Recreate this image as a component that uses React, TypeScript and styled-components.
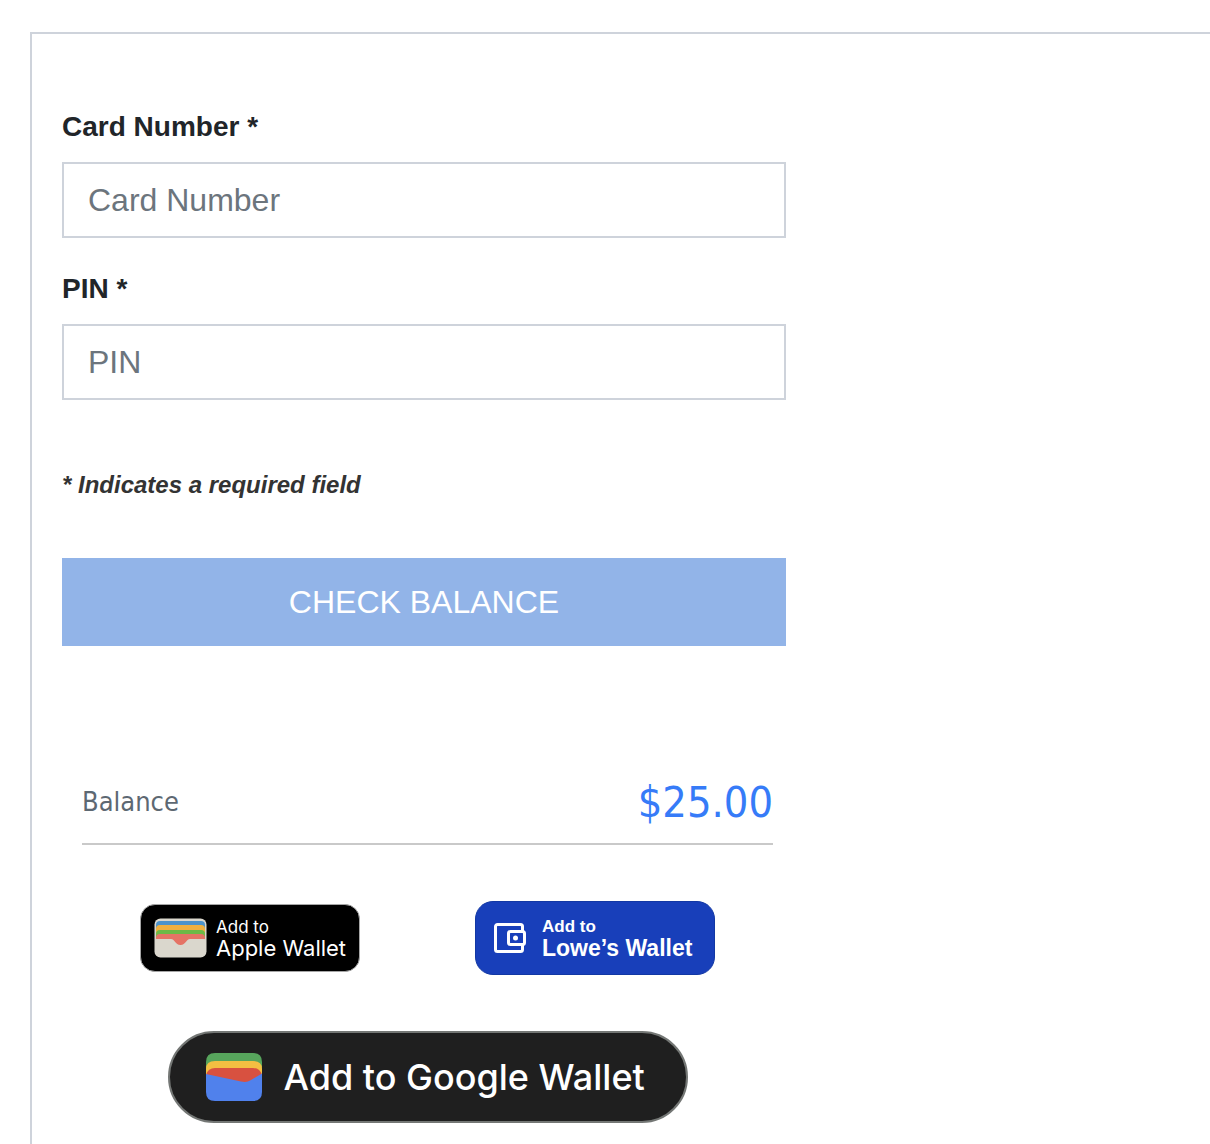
import React from "react";
import styled, { createGlobalStyle } from "styled-components";

const sans = `"Helvetica Neue", Helvetica, "Liberation Sans", Arial, sans-serif`;

const GlobalStyle = createGlobalStyle`
  *, *::before, *::after { box-sizing: border-box; }
  body { margin: 0; background: #fff; font-family: ${sans}; }
`;

const Page = styled.div`
  display: flex;
  flex-direction: column;
  min-height: 100vh;
  padding: 32px 0 0 30px;
`;

const Panel = styled.main`
  flex: 1;
  padding: 76px 30px 20px;
  border: 2px solid #ced3db;
  border-width: 2px 0 0 2px;
`;

const Content = styled.div`
  max-width: 724px;
`;

const Form = styled.form`
  display: flex;
  flex-direction: column;
  gap: 34px;
`;

const Field = styled.div`
  display: flex;
  flex-direction: column;
  gap: 18px;
`;

const Label = styled.label`
  font-size: 28px;
  font-weight: 700;
  line-height: 34px;
  color: #212529;
`;

const Input = styled.input`
  width: 100%;
  height: 76px;
  padding: 0 24px;
  border: 2px solid #ced3db;
  border-radius: 0;
  background: #fff;
  font-family: inherit;
  font-size: 32px;
  color: #212529;

  &::placeholder {
    color: #6c757d;
    opacity: 1;
  }
`;

const RequiredNote = styled.p`
  margin: 36px 0 24px;
  font-size: 24px;
  font-style: italic;
  font-weight: 700;
  line-height: 30px;
  color: #333;
`;

const SubmitButton = styled.button`
  height: 88px;
  border: 0;
  background: #92b4e8;
  font-family: inherit;
  font-size: 32px;
  color: #fff;
`;

const Result = styled.section`
  margin: 130px 13px 0 20px;
`;

const BalanceRow = styled.div`
  display: flex;
  align-items: center;
  justify-content: space-between;
  height: 69px;
  padding-bottom: 16px;
  border-bottom: 2px solid #c9c9c9;
  font-family: "DejaVu Sans Condensed", "DejaVu Sans", sans-serif;
`;

const BalanceLabel = styled.span`
  font-size: 27px;
  line-height: 34px;
  color: #5d6872;
`;

const BalanceAmount = styled.span`
  font-size: 43px;
  line-height: 50px;
  color: #367bf8;
`;

const WalletRow = styled.div`
  display: flex;
  align-items: center;
  justify-content: center;
  gap: 115px;
  margin-top: 56px;
`;

const WalletButton = styled.button`
  display: flex;
  align-items: center;
  flex-shrink: 0;
  color: #fff;
  text-align: left;
  white-space: nowrap;

  svg {
    flex-shrink: 0;
  }
`;

const AppleButton = styled(WalletButton)`
  gap: 9px;
  width: 220px;
  height: 68px;
  padding: 0 13px;
  border: 1px solid #a6a6a6;
  border-radius: 15px;
  background: #000;
  font-family: Inter, sans-serif;
`;

const LowesButton = styled(WalletButton)`
  gap: 16px;
  width: 240px;
  height: 74px;
  padding: 0 18px;
  border: 1px solid #1238a4;
  border-radius: 18px;
  background: #183fba;
  font-family: ${sans};
  font-weight: 700;
`;

const GoogleButton = styled(WalletButton)`
  gap: 22px;
  width: 520px;
  height: 92px;
  margin: 56px auto 0;
  padding: 0 36px;
  border: 2px solid #747775;
  border-radius: 46px;
  background: #1f1f1f;
  font-family: Inter, sans-serif;
  font-size: 36px;
  font-weight: 500;
`;

const Stack = styled.span`
  display: flex;
  flex-direction: column;
`;

const SmallLine = styled.span`
  font-size: 17px;
  line-height: 20px;
`;

const LargeLine = styled.span<{ $size: number }>`
  font-size: ${({ $size }) => $size}px;
  line-height: 22px;
`;

const AppleWalletIcon = () => (
  <svg width="53" height="40" viewBox="0 0 53 40" aria-hidden="true">
    <rect x="0.5" y="0.5" width="52" height="39" rx="6" fill="#dad7cd" />
    <path d="M2 7q0-4 4-4h41q4 0 4 4v8H2z" fill="#4c93cb" />
    <path d="M2 11q0-4 4-4h41q4 0 4 4v8H2z" fill="#f0b03f" />
    <path d="M2 16q0-4 4-4h41q4 0 4 4v4H2z" fill="#6db946" />
    <path d="M2 20q0-4 4-4h41q4 0 4 4v1H36c-4 0-4 6-9.500 6S21 21 17 21H2z" fill="#e57365" />
  </svg>
);

const LowesWalletIcon = () => (
  <svg width="32" height="32" viewBox="0 0 32 32" fill="none" stroke="#fff" strokeWidth="3" aria-hidden="true">
    <path d="M28.500 9V4.500a2 2 0 0 0-2-2h-23a2 2 0 0 0-2 2v23a2 2 0 0 0 2 2h23a2 2 0 0 0 2-2V23" />
    <rect x="14.500" y="9.500" width="16" height="13" rx="2" />
    <circle cx="21.500" cy="16" r="2.500" fill="#fff" stroke="none" />
  </svg>
);

const GoogleWalletIcon = () => (
  <svg width="56" height="48" viewBox="0 0 56 48" aria-hidden="true">
    <path d="M0 22V9q0-9 9-9h38q9 0 9 9v13z" fill="#57a55c" />
    <path d="M0 24V16q0-8 9-8h38q9 0 9 8v8z" fill="#f3bf42" />
    <path d="M0 30v-8q2-7 9-7h38q7 0 9 7v8z" fill="#d85140" />
    <path d="M0 21l35 7.500c4 .8 7 .5 10-1.500l11-6.500V39q0 9-9 9H9q-9 0-9-9z" fill="#5081ec" />
  </svg>
);

const fields = [
  { id: "card-number", label: "Card Number" },
  { id: "pin", label: "PIN" },
];

export default function App() {
  return (
    <>
      <GlobalStyle />
      <Page>
        <Panel>
          <Content>
            <Form onSubmit={(event: React.FormEvent) => event.preventDefault()}>
              {fields.map(({ id, label }) => (
                <Field key={id}>
                  <Label htmlFor={id}>{label} *</Label>
                  <Input id={id} type="text" placeholder={label} />
                </Field>
              ))}
              <RequiredNote>* Indicates a required field</RequiredNote>
              <SubmitButton type="submit">CHECK BALANCE</SubmitButton>
            </Form>
            <Result>
              <BalanceRow>
                <BalanceLabel>Balance</BalanceLabel>
                <BalanceAmount>$25.00</BalanceAmount>
              </BalanceRow>
              <WalletRow>
                <AppleButton type="button">
                  <AppleWalletIcon />
                  <Stack>
                    <SmallLine>Add to</SmallLine>
                    <LargeLine $size={22}>Apple Wallet</LargeLine>
                  </Stack>
                </AppleButton>
                <LowesButton type="button">
                  <LowesWalletIcon />
                  <Stack>
                    <SmallLine>Add to</SmallLine>
                    <LargeLine $size={23}>Lowe’s Wallet</LargeLine>
                  </Stack>
                </LowesButton>
              </WalletRow>
              <GoogleButton type="button">
                <GoogleWalletIcon />
                Add to Google Wallet
              </GoogleButton>
            </Result>
          </Content>
        </Panel>
      </Page>
    </>
  );
}
